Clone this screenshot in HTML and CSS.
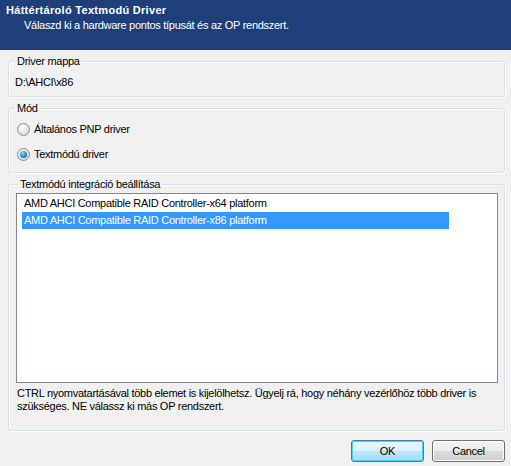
FILE: index.html
```html
<!DOCTYPE html>
<html>
<head>
<meta charset="utf-8">
<link rel="stylesheet" href="styles.css">
</head>
<body>
<div class="dialog">
  <div class="header">
    <div class="title">Háttértároló Textmodú Driver</div>
    <div class="subtitle">Válaszd ki a hardware pontos típusát és az OP rendszert.</div>
  </div>
  <div class="content">
    <fieldset class="group g1">
      <legend>Driver mappa</legend>
      <div class="path">D:\AHCI\x86</div>
    </fieldset>
    <fieldset class="group g2">
      <legend>Mód</legend>
      <div class="radio-row"><span class="radio"></span><span>Általános PNP driver</span></div>
      <div class="radio-row second"><span class="radio checked"></span><span>Textmódú driver</span></div>
    </fieldset>
    <fieldset class="group g3">
      <legend>Textmódú integráció beállítása</legend>
      <div class="listbox">
        <div class="item">AMD AHCI Compatible RAID Controller-x64 platform</div>
        <div class="item selected">AMD AHCI Compatible RAID Controller-x86 platform</div>
      </div>
      <div class="help">CTRL nyomvatartásával több elemet is kijelölhetsz. Ügyelj rá, hogy néhány vezérlőhöz több driver is szükséges. NE válassz ki más OP rendszert.</div>
    </fieldset>
    <div class="buttons">
      <button class="btn default">OK</button>
      <button class="btn">Cancel</button>
    </div>
  </div>
</div>
</body>
</html>
```
FILE: styles.css
```css
html, body {
  margin: 0;
  padding: 0;
  background: #f0f0f0;
}
body {
  font-family: "Liberation Sans", Arial, sans-serif;
  font-size: 11px;
  line-height: 13px;
  letter-spacing: -0.28px;
  color: #000;
}
.dialog {
  width: 511px;
  height: 466px;
  overflow: hidden;
}
.header {
  height: 50px;
  box-sizing: border-box;
  background: #1e3f79;
  color: #fff;
  padding-top: 4px;
}
.title {
  font-weight: bold;
  padding-left: 6px;
  letter-spacing: 0.3px;
}
.subtitle {
  padding-left: 24px;
  margin-top: 2px;
}
.content {
  padding: 0 6px 0 8px;
}
.group {
  margin: 5px 0 0 0;
  border: 1px solid #d5dfe5;
  border-radius: 3px;
  padding: 0 6px 0 4px;
  box-shadow: inset 1px 1px 0 #fff, 1px 1px 0 #fff;
}
.group legend {
  padding: 0 2px;
  margin-left: 2px;
  line-height: 13px;
}
.g1 { padding-top: 8px; padding-bottom: 7px; }
.path { padding-left: 2px; }
.g2 { padding-top: 8px; padding-bottom: 11px; }
.radio-row {
  display: flex;
  align-items: center;
  gap: 4px;
  padding-left: 4px;
  height: 13px;
}
.radio-row.second { margin-top: 12px; }
.radio {
  width: 11px;
  height: 11px;
  border-radius: 50%;
  border: 1px solid #8e8f8f;
  background: radial-gradient(circle at 40% 35%, #ffffff 0%, #e6e6e6 45%, #c9c9c9 100%);
  box-sizing: content-box;
  position: relative;
  flex: none;
}
.radio.checked::after {
  content: "";
  position: absolute;
  left: 2px;
  top: 2px;
  width: 7px;
  height: 7px;
  border-radius: 50%;
  background: radial-gradient(circle at 40% 35%, #8fe0ff 0%, #2a9ad8 45%, #0f4d8c 100%);
}
.g3 { padding-top: 2px; padding-bottom: 17px; padding-left: 7px; }
.listbox {
  height: 187px;
  border: 1px solid #828790;
  background: #fff;
  padding: 1px 0 0 5px;
}
.item {
  width: 427px;
  height: 17px;
  line-height: 17px;
  padding-left: 2px;
  box-sizing: border-box;
}
.item.selected {
  background: #3399ff;
  color: #fff;
}
.help {
  margin-top: 4px;
  padding-left: 1px;
  padding-right: 4px;
}
.buttons {
  display: flex;
  justify-content: flex-end;
  gap: 8px;
  margin-top: 9px;
}
.btn {
  width: 73px;
  height: 22px;
  font-family: "Liberation Sans", Arial, sans-serif;
  font-size: 11px;
  letter-spacing: -0.28px;
  color: #000;
  border: 1px solid #707070;
  border-radius: 3px;
  background: linear-gradient(#f2f2f2 0%, #ebebeb 50%, #dddddd 51%, #cfcfcf 100%);
  box-shadow: inset 0 0 0 1px #fcfcfc;
  padding: 0;
}
.btn.default {
  border-color: #3c7fb1;
  background: linear-gradient(#eaf6fd 0%, #d9f0fc 50%, #bee6fd 51%, #a7d9f5 100%);
  box-shadow: inset 0 0 0 1px #48d4fa;
}
```
